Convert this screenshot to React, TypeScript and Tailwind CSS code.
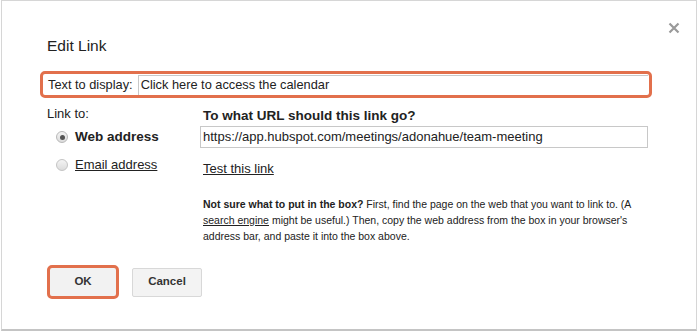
import React from "react";

export default function App() {
  return (
    <div className="w-[699px] h-[333px] bg-white" style={{ fontFamily: '"Liberation Sans", Arial, sans-serif' }}>
      <div className="relative ml-[1px] w-[696px] h-[331px] border border-[#d6d6d6] border-b-2 border-b-[#c4c4c4] bg-white text-[#222]">
        <button className="absolute left-[663px] top-[18px] w-[18px] h-[18px] flex items-center justify-center text-[#999]">
          <svg width="12" height="12" viewBox="0 0 12 12">
            <path d="M1.5 1.5 L10.5 10.5 M10.5 1.5 L1.5 10.5" stroke="#9a9a9a" strokeWidth="2.2" />
          </svg>
        </button>
        <div className="pt-[35px] pl-[45px]">
          <div className="text-[15.5px] leading-[20px] text-[#222]">Edit Link</div>
          <div className="mt-[15px] ml-[-7px] w-[612px] h-[27px] rounded-[5px] border-[3px] border-[#e2704c] flex items-center pl-[5px] pr-[1px]">
            <span className="text-[12.8px] leading-[16px] mr-[5px] whitespace-nowrap">Text to display:</span>
            <div className="flex-1 h-[20px] border-l border-t border-[#c8c8c8] flex items-center pl-[2px] text-[12.8px]">
              Click here to access the calendar
            </div>
          </div>
          <div className="flex mt-[7px]">
            <div className="w-[156px] text-[13px]">
              <div className="leading-[16px] mt-[1px]">Link to:</div>
              <div className="flex items-center mt-[7px] ml-[9px]">
                <span className="w-[12px] h-[12px] rounded-full border border-[#b8b8b8] bg-gradient-to-b from-[#f4f4f4] to-[#dcdcdc] flex items-center justify-center mr-[7px]">
                  <span className="w-[5px] h-[5px] rounded-full bg-[#555]"></span>
                </span>
                <span className="font-bold text-[13.5px] leading-[16px]">Web address</span>
              </div>
              <div className="flex items-center mt-[12px] ml-[9px]">
                <span className="w-[12px] h-[12px] rounded-full border border-[#c4c4c4] bg-gradient-to-b from-[#f4f4f4] to-[#dcdcdc] mr-[7px]"></span>
                <span className="underline leading-[16px]">Email address</span>
              </div>
            </div>
            <div className="w-[449px]">
              <div className="font-bold text-[13.5px] leading-[16px] mt-[3px]">To what URL should this link go?</div>
              <div className="mt-[2px] ml-[-3px] w-[448px] h-[22px] border border-[#c8c8c8] flex items-center pl-[2px] text-[13px]">
                https://app.hubspot.com/meetings/adonahue/team-meeting
              </div>
              <div className="mt-[13px] text-[13px] leading-[16px] underline">Test this link</div>
              <p className="mt-[19px] text-[10.5px] leading-[16px] text-[#222] pr-[8px]">
                <b>Not sure what to put in the box?</b> First, find the page on the web that you want to link to. (A{" "}
                <u>search engine</u> might be useful.) Then, copy the web address from the box in your browser's address bar, and paste it into the box above.
              </p>
            </div>
          </div>
          <div className="flex items-center mt-[21px]">
            <div className="w-[72px] h-[34px] rounded-[5px] border-[3px] border-[#e2704c] bg-[#f2f2f2] flex items-center justify-center text-[11.5px] font-bold text-[#333]">
              OK
            </div>
            <div className="ml-[13px] w-[70px] h-[29px] rounded-[2px] border border-[#d8d8d8] bg-[#f3f3f3] flex items-center justify-center text-[11.5px] font-bold text-[#333]">
              Cancel
            </div>
          </div>
        </div>
      </div>
    </div>
  );
}
